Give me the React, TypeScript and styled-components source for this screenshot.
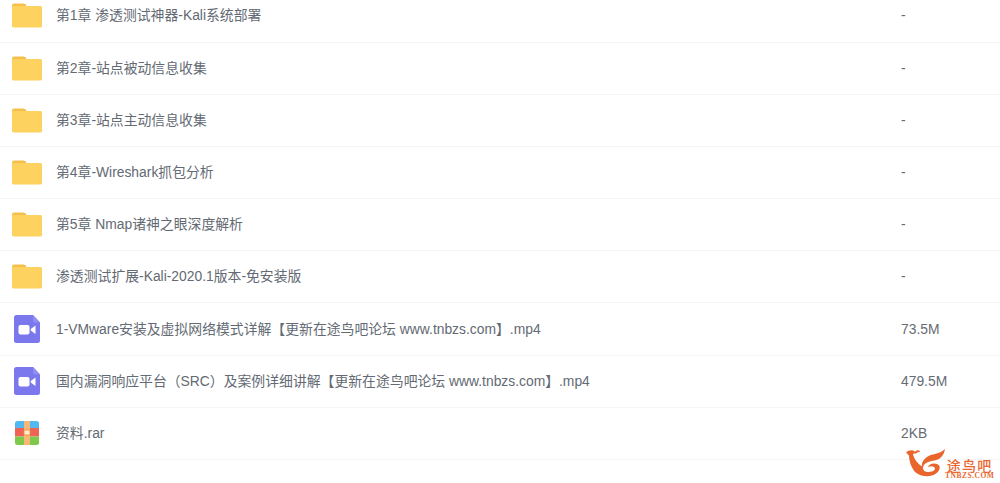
import React from "react";
import styled, { createGlobalStyle } from "styled-components";

const Global = createGlobalStyle`
  html, body { margin: 0; padding: 0; background: #fff; overflow: hidden; }
  body { font-family: "Liberation Sans", "Noto Sans CJK SC", sans-serif; }
`;

const Page = styled.div`
  position: relative;
  width: 1000px;
  height: 483px;
  overflow: hidden;
`;

const List = styled.ul`
  list-style: none;
  margin: -9.7px 0 0;
  padding: 0;
`;

const Row = styled.li`
  box-sizing: border-box;
  height: 52.2px;
  display: grid;
  grid-template-columns: 56px 845px 1fr;
  align-items: center;
  border-bottom: 1px solid #f3f4f6;
`;

const IconCell = styled.div`
  display: flex;
  align-items: center;
  padding-left: 12px;
`;

const Name = styled.span`
  font-size: 13.85px;
  line-height: 18px;
  color: #636a73;
  white-space: nowrap;
  margin-top: -1px;
`;

const Size = styled.span`
  font-size: 13.85px;
  line-height: 18px;
  color: #666b73;
  margin-top: -1px;
`;

const Mark = styled.div`
  position: absolute;
  left: 905px;
  top: 449px;
  display: flex;
  align-items: flex-start;
  pointer-events: none;
`;

const MarkText = styled.div`
  display: flex;
  flex-direction: column;
  align-items: center;
  margin: 9px 0 0 -3px;
  color: #e9672f;
`;

const MarkTitle = styled.span`
  font-size: 14px;
  line-height: 14px;
  font-weight: 500;
  letter-spacing: 1.2px;
  font-family: "Noto Sans CJK SC", sans-serif;
`;

const MarkSub = styled.span`
  font-size: 7.5px;
  line-height: 8px;
  font-weight: 700;
  letter-spacing: 0.5px;
  font-family: "Liberation Serif", serif;
`;

const Folder = () => (
  <svg width="30" height="25" viewBox="0 0 30 25">
    <path d="M0 2.5A2 2 0 0 1 2 .5h9.5a3 3 0 0 1 3 2.5H0z" fill="#f5bf4f" />
    <path d="M0 3h28.5A1.5 1.5 0 0 1 30 4.5V23a1.5 1.5 0 0 1-1.5 1.5h-27A1.5 1.5 0 0 1 0 23z" fill="#fdd25f" />
  </svg>
);

const Video = () => (
  <svg width="30" height="30" viewBox="0 0 30 30">
    <path d="M2 3.500A2.500 2.500 0 0 1 4.500 1H21l7 7.500V26.500a2.500 2.500 0 0 1-2.500 2.500H4.500A2.500 2.500 0 0 1 2 26.500z" fill="#7b78ee" />
    <path d="M21 1l7 7.500h-5a2 2 0 0 1-2-2z" fill="#8f8cf2" />
    <rect x="6.500" y="11" width="11" height="9.500" rx="2" fill="#fff" />
    <path d="M18.800 15l4.700-3.500v8.500l-4.700-3.500z" fill="#fff" />
  </svg>
);

const Archive = () => (
  <svg width="30" height="30" viewBox="0 0 30 30">
    <path d="M3 5.500A2.500 2.500 0 0 1 5.500 3h19A2.500 2.500 0 0 1 27 5.500V10H3z" fill="#52b8f2" />
    <rect x="3" y="10" width="24" height="8.500" fill="#ef6354" />
    <path d="M3 18.500h24v6a2.500 2.500 0 0 1-2.500 2.500h-19A2.500 2.500 0 0 1 3 24.500z" fill="#7ec84a" />
    <rect x="12" y="3" width="6" height="24" fill="#f7b877" />
    <rect x="12" y="12" width="6" height="5" rx="1" fill="#fff1d8" stroke="#e8963f" />
  </svg>
);

const Logo = () => (
  <svg width="43" height="31" viewBox="0 0 43 34" preserveAspectRatio="none">
    <path d="M1 4C4 0 9 1 10 3c2-2 4-2 5 0-2 0-3 1-4 2-2 0-3 0-3 1 1 4 4 10 9 13-1-6 5-12 11-13 5-1 9-3 12-6-1 7-5 12-12 13-6 1-10 4-10 8 0 3 3 5 7 4 3 0 5-2 5-4-1-2-4-3-7-1 1-4 6-5 10-3 3 2 2 7-2 10-5 4-14 4-20-1C6 21 4 12 4 7 3 6 2 5 1 4z" fill="#e9652c" />
  </svg>
);

const rows = [
  { icon: <Folder />, name: "第1章 渗透测试神器-Kali系统部署", size: "-" },
  { icon: <Folder />, name: "第2章-站点被动信息收集", size: "-" },
  { icon: <Folder />, name: "第3章-站点主动信息收集", size: "-" },
  { icon: <Folder />, name: "第4章-Wireshark抓包分析", size: "-" },
  { icon: <Folder />, name: "第5章 Nmap诸神之眼深度解析", size: "-" },
  { icon: <Folder />, name: "渗透测试扩展-Kali-2020.1版本-免安装版", size: "-" },
  { icon: <Video />, name: "1-VMware安装及虚拟网络模式详解【更新在途鸟吧论坛 www.tnbzs.com】.mp4", size: "73.5M" },
  { icon: <Video />, name: "国内漏洞响应平台（SRC）及案例详细讲解【更新在途鸟吧论坛 www.tnbzs.com】.mp4", size: "479.5M" },
  { icon: <Archive />, name: "资料.rar", size: "2KB" },
];

export default function App() {
  return (
    <Page>
      <Global />
      <List>
        {rows.map((r) => (
          <Row key={r.name}>
            <IconCell>{r.icon}</IconCell>
            <Name>{r.name}</Name>
            <Size>{r.size}</Size>
          </Row>
        ))}
      </List>
      <Mark>
        <Logo />
        <MarkText>
          <MarkTitle>途鸟吧</MarkTitle>
          <MarkSub>TNBZS.COM</MarkSub>
        </MarkText>
      </Mark>
    </Page>
  );
}
